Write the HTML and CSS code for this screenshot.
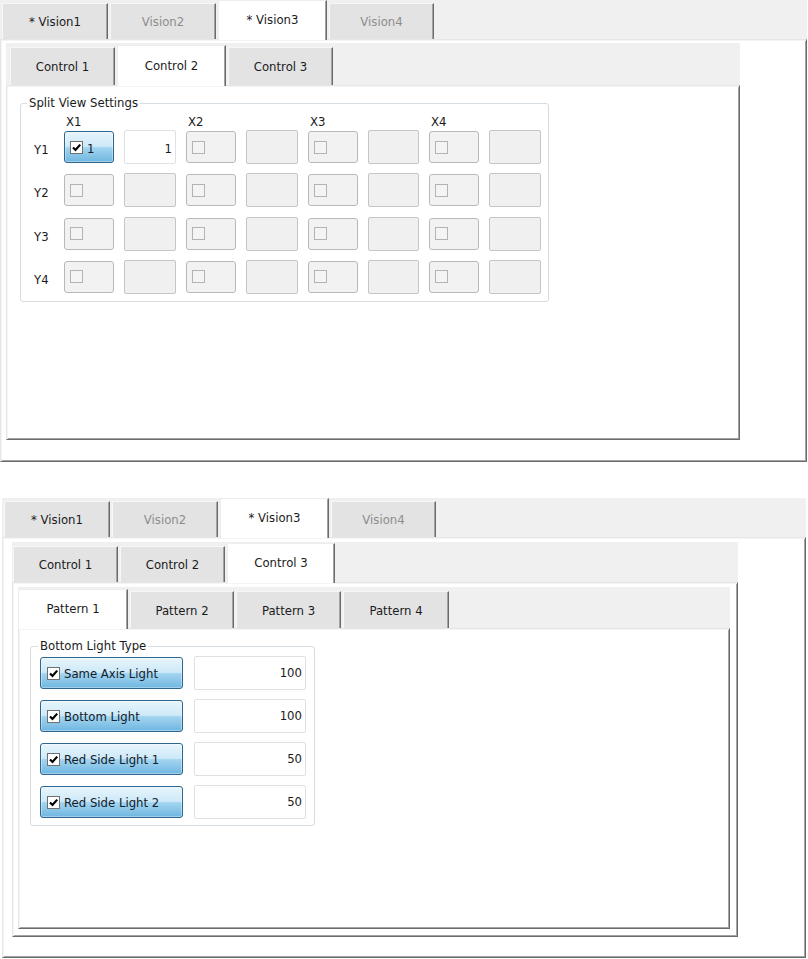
FILE: index.html
```html
<!DOCTYPE html>
<html>
<head>
<meta charset="utf-8">
<link rel="stylesheet" href="styles.css">
</head>
<body>
<div class="tw tw-a">
  <div class="tabbar tb-vision">
    <div class="tab w106">* Vision1</div>
    <div class="tab dis w106">Vision2</div>
    <div class="tab sel w109">* Vision3</div>
    <div class="tab dis w105">Vision4</div>
  </div>
  <div class="pane pane-a">
    <div class="tw tw-ctl-a">
      <div class="tabbar tb-ctl-a">
        <div class="tab w105">Control 1</div>
        <div class="tab sel w109">Control 2</div>
        <div class="tab w105">Control 3</div>
      </div>
      <div class="pane">
        <div class="group grp-a">
          <div class="group-title">Split View Settings</div>
          <div class="split-head">
            <span></span><span class="xh">X1</span><span></span><span class="xh">X2</span><span></span><span class="xh">X3</span><span></span><span class="xh">X4</span><span></span>
          </div>
          <div class="split-grid">
            <span class="yl">Y1</span>
            <div class="cbtn on"><span class="cb on"><svg viewBox="0 0 11 11" width="11" height="11"><path d="M2 5.5 L4.5 8 L9.2 2.6" fill="none" stroke="#000" stroke-width="2.2"/></svg></span><span class="cbtxt">1</span></div>
            <div class="tbox on">1</div>
            <div class="cbtn"><span class="cb"></span></div><div class="tbox"></div>
            <div class="cbtn"><span class="cb"></span></div><div class="tbox"></div>
            <div class="cbtn"><span class="cb"></span></div><div class="tbox"></div>

            <span class="yl">Y2</span>
            <div class="cbtn"><span class="cb"></span></div><div class="tbox"></div>
            <div class="cbtn"><span class="cb"></span></div><div class="tbox"></div>
            <div class="cbtn"><span class="cb"></span></div><div class="tbox"></div>
            <div class="cbtn"><span class="cb"></span></div><div class="tbox"></div>

            <span class="yl">Y3</span>
            <div class="cbtn"><span class="cb"></span></div><div class="tbox"></div>
            <div class="cbtn"><span class="cb"></span></div><div class="tbox"></div>
            <div class="cbtn"><span class="cb"></span></div><div class="tbox"></div>
            <div class="cbtn"><span class="cb"></span></div><div class="tbox"></div>

            <span class="yl">Y4</span>
            <div class="cbtn"><span class="cb"></span></div><div class="tbox"></div>
            <div class="cbtn"><span class="cb"></span></div><div class="tbox"></div>
            <div class="cbtn"><span class="cb"></span></div><div class="tbox"></div>
            <div class="cbtn"><span class="cb"></span></div><div class="tbox"></div>
          </div>
        </div>
      </div>
    </div>
  </div>
</div>

<div class="tw tw-b">
  <div class="tabbar tb-vision">
    <div class="tab w106">* Vision1</div>
    <div class="tab dis w106">Vision2</div>
    <div class="tab sel w109">* Vision3</div>
    <div class="tab dis w105">Vision4</div>
  </div>
  <div class="pane pane-b">
    <div class="tw tw-ctl-b">
      <div class="tabbar tb-ctl-b">
        <div class="tab w105">Control 1</div>
        <div class="tab w105">Control 2</div>
        <div class="tab sel w108">Control 3</div>
      </div>
      <div class="pane pane-ctl-b">
        <div class="tw tw-pat">
          <div class="tabbar tb-pat">
            <div class="tab sel w110">Pattern 1</div>
            <div class="tab w104">Pattern 2</div>
            <div class="tab w105">Pattern 3</div>
            <div class="tab w106">Pattern 4</div>
          </div>
          <div class="pane">
            <div class="group grp-b">
              <div class="group-title">Bottom Light Type</div>
              <div class="light-grid">
                <div class="cbtn on"><span class="cb on"><svg viewBox="0 0 11 11" width="11" height="11"><path d="M2 5.5 L4.5 8 L9.2 2.6" fill="none" stroke="#000" stroke-width="2.2"/></svg></span><span class="cbtxt">Same Axis Light</span></div>
                <div class="tbox on">100</div>
                <div class="cbtn on"><span class="cb on"><svg viewBox="0 0 11 11" width="11" height="11"><path d="M2 5.5 L4.5 8 L9.2 2.6" fill="none" stroke="#000" stroke-width="2.2"/></svg></span><span class="cbtxt">Bottom Light</span></div>
                <div class="tbox on">100</div>
                <div class="cbtn on"><span class="cb on"><svg viewBox="0 0 11 11" width="11" height="11"><path d="M2 5.5 L4.5 8 L9.2 2.6" fill="none" stroke="#000" stroke-width="2.2"/></svg></span><span class="cbtxt">Red Side Light 1</span></div>
                <div class="tbox on">50</div>
                <div class="cbtn on"><span class="cb on"><svg viewBox="0 0 11 11" width="11" height="11"><path d="M2 5.5 L4.5 8 L9.2 2.6" fill="none" stroke="#000" stroke-width="2.2"/></svg></span><span class="cbtxt">Red Side Light 2</span></div>
                <div class="tbox on">50</div>
              </div>
            </div>
          </div>
        </div>
      </div>
    </div>
  </div>
</div>
</body>
</html>
```

FILE: styles.css
```css
* { box-sizing: border-box; }

body {
  margin: 0;
  background: #ffffff;
  font-family: "DejaVu Sans", "Noto Sans", sans-serif;
  font-size: 11.7px;
  color: #1b1b1b;
}

/* tab widgets */
.tw {
  display: flex;
  flex-direction: column;
}
.tw-a { width: 807px; height: 462px; }
.tw-b { width: 804px; height: 460px; margin: 36px 0 0 2px; }
.tw-ctl-a { width: 734px; height: 397px; }
.tw-ctl-b { width: 726px; height: 395px; }
.tw-pat { width: 712px; height: 342px; }

.tabbar {
  display: flex;
  align-items: flex-start;
  gap: 2px;
  background: #f0f0f0;
  flex: none;
}
.tb-vision { height: 39px; padding-left: 2px; }
.tb-ctl-a { height: 42px; padding-left: 4px; }
.tb-ctl-b { height: 40px; padding-left: 1px; }
.tb-pat { height: 41px; padding-left: 0; }

.tab {
  display: flex;
  align-items: center;
  justify-content: center;
  background: #e3e3e3;
  border-top: 1px solid #f7f7f7;
  border-left: 1px solid #f7f7f7;
  border-right: 1px solid #6b6b6b;
  box-shadow: inset -1px 0 0 #a3a3a3;
  padding-top: 1px;
  white-space: nowrap;
}
.tab.dis { color: #8d8d8d; }
.tab.sel {
  position: relative;
  z-index: 1;
  background: #ffffff;
  border-top: 1px solid #ededed;
  border-left: 1px solid #ededed;
  padding-top: 0;
  padding-bottom: 1px;
}

.tb-vision .tab { margin-top: 3px; height: 36px; }
.tb-vision .tab.sel { margin-top: 0; height: 40px; }
.tb-ctl-a .tab { margin-top: 4px; height: 38px; }
.tb-ctl-a .tab.sel { margin-top: 2px; height: 41px; }
.tb-ctl-b .tab { margin-top: 4px; height: 36px; }
.tb-ctl-b .tab.sel { margin-top: 1px; height: 40px; }
.tb-pat .tab { margin-top: 4px; height: 37px; }
.tb-pat .tab.sel { margin-top: 2px; height: 40px; }

.w104 { width: 104px; }
.w105 { width: 105px; }
.w106 { width: 106px; }
.w108 { width: 108px; }
.w109 { width: 109px; }
.w110 { width: 110px; }

.pane {
  flex: 1;
  background: #ffffff;
  border: 1px solid;
  border-color: #e6e6e6 #6b6b6b #6b6b6b #e6e6e6;
  box-shadow: inset 1px 1px 0 #f4f4f4, inset -1px -1px 0 #a3a3a3;
}
.pane-a { padding: 3px 0 0 5px; }
.pane-b { padding: 4px 0 0 9px; }
.pane-ctl-b { padding: 4px 0 0 5px; }

/* group boxes */
.group {
  position: relative;
  border: 1px solid #d5dde3;
  border-radius: 3px;
}
.group-title {
  position: absolute;
  top: -8px;
  background: #ffffff;
  padding: 0 2px;
  line-height: 14px;
  white-space: nowrap;
}
.grp-a { width: 529px; margin: 17px 0 0 13px; padding: 10px 7px 7px 13px; }
.grp-a .group-title { left: 6px; }
.grp-b { width: 285px; margin: 17px 0 0 11px; padding: 9px 7px 6px 9px; }
.grp-b .group-title { left: 7px; }

.split-head,
.split-grid {
  display: grid;
  grid-template-columns: 20px 50px 52px 50px 52px 50px 51px 50px 52px;
  column-gap: 10px;
}
.split-head { height: 14px; line-height: 14px; margin-bottom: 2px; padding-top: 1px; }
.xh { padding-left: 2px; }
.split-grid {
  grid-template-rows: repeat(4, 34px);
  row-gap: 9.33px;
  align-items: center;
}
.yl { line-height: 14px; padding-top: 6px; }
.split-grid .tbox { line-height: 36px; }
.split-grid .cbtxt { padding-top: 3px; }

.light-grid {
  display: grid;
  grid-template-columns: 143px 112px;
  grid-template-rows: repeat(4, 34px);
  column-gap: 11px;
  row-gap: 9px;
  align-items: center;
}

/* checkbox buttons */
.cbtn {
  height: 32px;
  display: flex;
  align-items: center;
  padding-left: 5px;
  background: #f2f2f2;
  border: 1px solid #b6b9bb;
  border-radius: 3px;
}
.cbtn.on {
  border-color: #2f668f;
  background: linear-gradient(#e8f5fc 0%, #cde9f8 48%, #a3d5f0 52%, #6fb6e0 100%);
  box-shadow: inset 0 0 0 1px rgba(255, 255, 255, 0.35);
}
.light-grid .cbtn.on { padding-left: 6px; }
.cb {
  width: 13px;
  height: 13px;
  flex: none;
  border: 1px solid #b3b3b3;
  background: #f4f4f4;
  display: flex;
  align-items: center;
  justify-content: center;
}
.cb.on {
  border-color: #6f6f6f;
  background: #ffffff;
}
.cbtxt { margin-left: 4px; white-space: nowrap; color: #14202b; }
.light-grid .cbtxt { padding-top: 1px; }

/* text boxes */
.tbox {
  height: 34px;
  background: #f0f0f0;
  border: 1px solid #c6c6c6;
  border-radius: 2px;
  text-align: right;
  padding-right: 3px;
  line-height: 33px;
}
.tbox.on {
  background: #ffffff;
  border-color: #dfe1e5;
}
```
